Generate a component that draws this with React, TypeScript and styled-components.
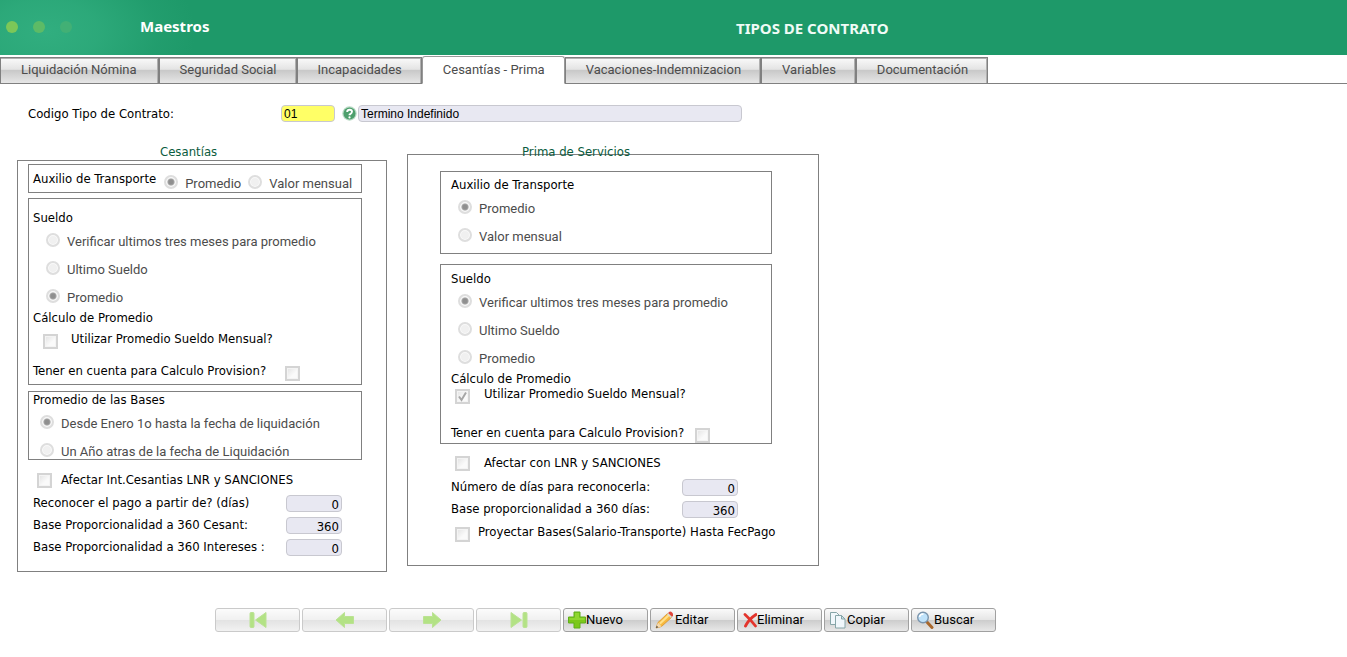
import React from 'react';
import styled, { createGlobalStyle, css } from 'styled-components';

const labelFont = '"DejaVu Sans Condensed", "DejaVu Sans", sans-serif';
const uiFont = 'Roboto, "Noto Sans", sans-serif';
const titleFont = '"Noto Sans", "Open Sans", sans-serif';
const line = '#808080';

const GlobalStyle = createGlobalStyle`
  *, *::before, *::after { box-sizing: border-box; }
  body {
    margin: 0;
    background: #fff;
    color: #000;
    font: 13px/16px ${labelFont};
  }
  input, button { font: inherit; margin: 0; }
`;

const Header = styled.header`
  display: flex;
  align-items: center;
  min-height: 55px;
  padding-bottom: 2px;
  background:
    radial-gradient(ellipse 150px 90px at 46px 32px, #31ae7f 0%, rgba(49, 174, 127, 0.75) 35%, rgba(49, 174, 127, 0.2) 75%, rgba(49, 174, 127, 0) 100%),
    #1e9969;
  color: #fff;
  font: bold 15px/20px ${titleFont};
`;

const Dots = styled.svg`
  width: 140px;
  height: 14px;
`;

const Brand = styled.span`
  width: 596px;
  padding-bottom: 2px;
`;

const PageTitle = styled.h1`
  margin: 0;
  padding-top: 2px;
  color: #f0fbf6;
  font: inherit;
`;

const TabBar = styled.nav`
  display: flex;
  align-items: flex-end;
  padding-top: 1px;

  &::after {
    content: '';
    flex: 1;
    border-bottom: 1px solid ${line};
  }
`;

const Tab = styled.button<{ $active?: boolean }>`
  height: 27px;
  padding: 0 19px 2px 20px;
  border: 1px solid ${line};
  box-shadow: inset 0 1px 0 #b0b0b0, inset -1px 0 0 #b0b0b0;
  background: linear-gradient(#fafafa 0%, #e4e4e4 45%, #c9c9c9 50%, #e6e6e6 100%);
  color: #4c4c4c;
  font: 13px/20px ${uiFont};
  white-space: nowrap;

  &:first-child { padding-right: 21px; }

  ${({ $active }) => $active && css`
    height: 28px;
    padding-bottom: 0;
    border-color: #999;
    border-bottom-color: #fff;
    border-radius: 3px 3px 0 0;
    box-shadow: none;
    background: #fff;
  `}
`;

const CodeRow = styled.div`
  display: flex;
  align-items: center;
  padding: 21px 0 0 28px;
`;

const CodeLabel = styled.label`
  width: 253px;
`;

const Field = styled.input<{ $w: number; $tone?: 'key' }>`
  width: ${({ $w }) => $w}px;
  height: 17px;
  padding: 0 2px;
  border: 1px solid #c8c8d0;
  border-radius: 4px;
  background: ${({ $tone }) => ($tone === 'key' ? '#ffff66' : '#e8e8f2')};
  color: #000;
  font: 12px/15px "Liberation Sans", Arial, sans-serif;
`;

const NumberField = styled(Field)`
  padding-top: 2px;
  font: 13px/13px ${labelFont};
  text-align: right;
`;

const HelpButton = styled.button`
  display: flex;
  padding: 0;
  margin: 0 1px 0 7px;
  border: 0;
  background: none;
`;

const Panels = styled.main`
  display: flex;
  align-items: flex-start;
  gap: 20px;
  padding: 22px 17px 0;
`;

const Section = styled.section<{ $w: number }>`
  width: ${({ $w }) => $w}px;
`;

const SectionTitle = styled.h2<{ $indent: number }>`
  margin: 0;
  padding-left: ${({ $indent }) => $indent}px;
  color: #0b5c40;
  font: inherit;
`;

const Panel = styled.div<{ $left: number; $top: number; $bottom: number; $raised?: boolean }>`
  margin-top: ${({ $raised }) => ($raised ? -6 : 0)}px;
  padding: ${({ $top }) => $top}px 24px ${({ $bottom }) => $bottom}px ${({ $left }) => $left}px;
  border: 1px solid ${line};
`;

const Box = styled.div<{ $pad: number; $top?: number; $bottom?: number; $after: number; $inset?: number }>`
  padding: ${({ $top = 0 }) => $top}px 0 ${({ $bottom = 0 }) => $bottom}px ${({ $pad }) => $pad}px;
  margin: 0 ${({ $inset = 0 }) => $inset}px ${({ $after }) => $after}px 0;
  border: 1px solid ${line};
`;

const InlineGroup = styled.div`
  display: flex;
  gap: 8px;
  height: 27px;
  padding-top: 6px;
  white-space: nowrap;
`;

const Heading = styled.div`
  height: 16px;
`;

const Choices = styled.div<{ $indent?: number; $inline?: boolean; $tight?: boolean }>`
  display: flex;
  flex-direction: ${({ $inline }) => ($inline ? 'row' : 'column')};
  gap: ${({ $inline }) => ($inline ? 7 : 0)}px;
  margin-top: ${({ $inline }) => ($inline ? -3 : 0)}px;
  margin-bottom: ${({ $tight }) => ($tight ? -5 : 0)}px;
  padding-left: ${({ $indent = 0 }) => $indent}px;
`;

const ChoiceLabel = styled.label`
  display: flex;
  align-items: center;
  gap: 7px;
  height: 28px;
  color: #4c4c4c;
  font: 13px/16px ${uiFont};

  span { padding-top: 3px; white-space: nowrap; }
`;

const Radio = styled.input.attrs({ type: 'radio' })`
  appearance: none;
  width: 14px;
  height: 14px;
  border: 2px solid #dedede;
  border-radius: 50%;
  background: #f0f0f0;
  box-shadow: inset 0 0 0 1px #fafafa;

  &:checked {
    background: radial-gradient(circle, #8f8f8f 0 2px, #a4a4a4 3px, #ececec 4px);
  }
`;

const CheckRow = styled.div<{ $h: number; $indent?: number; $gap: number; $above?: number }>`
  display: flex;
  align-items: center;
  gap: ${({ $gap }) => $gap}px;
  height: ${({ $h }) => $h}px;
  margin-top: ${({ $above = 0 }) => $above}px;
  padding-left: ${({ $indent = 0 }) => $indent}px;
  white-space: nowrap;
`;

const CheckSlot = styled.span<{ $low?: boolean }>`
  position: relative;
  display: flex;
  padding-top: ${({ $low }) => ($low ? 5 : 0)}px;

  svg {
    position: absolute;
    left: 0;
    bottom: 0;
    pointer-events: none;
  }
`;

const Checkbox = styled.input.attrs({ type: 'checkbox' })`
  appearance: none;
  width: 15px;
  height: 15px;
  border: 2px solid #d4d4d4;
  background: linear-gradient(135deg, #e2e2e2, #fafafa 60%);
  box-shadow: inset 0 0 0 1px #f4f4f4;
`;

const ValueRow = styled.div`
  display: flex;
  align-items: center;
  height: 22px;
`;

const ValueLabel = styled.label<{ $w: number }>`
  width: ${({ $w }) => $w}px;
  white-space: nowrap;
`;

const Indented = styled.div<{ $left: number }>`
  padding-left: ${({ $left }) => $left}px;
`;

const Toolbar = styled.footer`
  display: flex;
  gap: 2px;
  padding: 36px 0 25px 215px;
`;

const ToolButton = styled.button`
  display: flex;
  align-items: center;
  width: 85px;
  height: 24px;
  padding: 0 0 0 4px;
  border: 1px solid #a0a0a0;
  border-radius: 3px;
  background: linear-gradient(#fafafa 0%, #e6e6e6 48%, #cdcdcd 52%, #e8e8e8 100%);
  color: #000;
  font: 13px/20px ${uiFont};

  &:disabled {
    justify-content: center;
    padding: 0;
    opacity: 0.55;
  }
`;

type ChoiceProps = { name: string; options: string[]; selected: number; indent?: number; inline?: boolean; tight?: boolean };

function RadioGroup({ name, options, selected, indent, inline, tight }: ChoiceProps) {
  return (
    <Choices role="radiogroup" $indent={indent} $inline={inline} $tight={tight}>
      {options.map((text, i) => (
        <ChoiceLabel key={text}>
          <Radio name={name} defaultChecked={i === selected} disabled />
          <span>{text}</span>
        </ChoiceLabel>
      ))}
    </Choices>
  );
}

type CheckProps = { id: string; text: string; h: number; gap: number; indent?: number; above?: number; low?: boolean; checked?: boolean; after?: boolean };

function Check({ id, text, h, gap, indent, above, low, checked, after }: CheckProps) {
  const box = (
    <CheckSlot $low={low}>
      <Checkbox id={id} defaultChecked={checked} disabled />
      {checked && (
        <svg width="15" height="15" viewBox="0 0 15 15" fill="none" stroke="#a6a6a6" strokeWidth="2">
          <path d="M4 7.5 6.5 11 11 3.5" />
        </svg>
      )}
    </CheckSlot>
  );
  const label = <label htmlFor={id}>{text}</label>;
  return (
    <CheckRow $h={h} $gap={gap} $indent={indent} $above={above}>
      {after ? <>{label}{box}</> : <>{box}{label}</>}
    </CheckRow>
  );
}

function Value({ id, text, value, w }: { id: string; text: string; value: string; w: number }) {
  return (
    <ValueRow>
      <ValueLabel htmlFor={id} $w={w}>{text}</ValueLabel>
      <NumberField id={id} $w={56} defaultValue={value} readOnly />
    </ValueRow>
  );
}

const arrow = { fill: '#7cc81c', stroke: '#5fae1a', strokeWidth: 1, strokeLinejoin: 'round' as const };
const move = { fill: '#76cc22', stroke: '#84cc3c', strokeWidth: 1, strokeLinejoin: 'round' as const };

const FirstIcon = () => (
  <svg width="18" height="18" viewBox="0 0 18 18" {...move}>
    <rect x="1" y="1.5" width="4" height="15" rx="1" />
    <path d="M17 1.500v15L6.500 9z" />
  </svg>
);
const PrevIcon = () => (
  <svg width="20" height="18" viewBox="0 0 20 18" {...move}>
    <path d="M1 9 9.5 1.5V5.500H18.5v7H9.5v4z" />
  </svg>
);
const NextIcon = () => (
  <svg width="20" height="18" viewBox="0 0 20 18" {...move}>
    <path d="M19 9 10.5 1.5V5.500H1.5v7h9v4z" />
  </svg>
);
const LastIcon = () => (
  <svg width="18" height="18" viewBox="0 0 18 18" {...move}>
    <path d="M1 1.500v15L11.500 9z" />
    <rect x="13" y="1.5" width="4" height="15" rx="1" />
  </svg>
);
const AddIcon = () => (
  <svg width="18" height="18" viewBox="0 0 18 18" {...arrow}>
    <path d="M6 1h6v5h5.5v6H12v5H6v-5H.5V6H6z" />
    <path d="M7 2h4v5h5.5v2H1.5V7H7z" fill="#8fd62f" stroke="none" />
  </svg>
);
const EditIcon = () => (
  <svg width="20" height="18" viewBox="0 0 20 18">
    <path d="M1 17 3 11.5 13 2l4 4L6.5 15.5z" fill="#f7b93e" stroke="#d8922c" strokeWidth=".8" />
    <path d="M4 12 13.5 3l1.500 1.500L5.500 13.500z" fill="#ffe08a" />
    <path d="M13 2l1.500-1.200q1.200-.6 2.600.7t.9 2.900L17 6z" fill="#e0463c" />
    <path d="M12 3l1-1 4 4-1 1z" fill="#d5dbe0" />
    <path d="M1 17l2-5.500 3.500 4z" fill="#f3d9b0" />
    <path d="M1 17l.8-2.200L3.200 16.200z" fill="#333" />
  </svg>
);
const DeleteIcon = () => (
  <svg width="15" height="18" viewBox="0 0 15 18" fill="none" stroke="#e3342c" strokeWidth="2.8" strokeLinecap="round">
    <path d="M3 3.500Q8 8 13.500 15M14 3.500Q7 8 3.500 15" />
  </svg>
);
const CopyIcon = () => (
  <svg width="18" height="18" viewBox="0 0 18 18" fill="#f0f7fb" stroke="#86a5a8" strokeWidth="1">
    <path d="M1.500 1.500h6l3 3v9h-9z" />
    <path d="M6.500 4.500h6l3.500 3.500v9h-9.500z" />
    <path d="M12.500 4.500V8H16z" fill="#cfe3ea" />
  </svg>
);
const SearchIcon = () => (
  <svg width="18" height="18" viewBox="0 0 18 18">
    <path d="M10.500 10.500 16 16.500" stroke="#a8672c" strokeWidth="3" strokeLinecap="round" />
    <circle cx="7" cy="6.500" r="5.300" fill="#bfe2fa" stroke="#7a94ac" strokeWidth="1.400" />
    <path d="M3.500 6Q4 3 7.500 3" stroke="#fff" strokeWidth="1.500" fill="none" />
  </svg>
);
const HelpIcon = () => (
  <svg width="15" height="16" viewBox="0 0 15 16">
    <circle cx="7.500" cy="7.500" r="7.200" fill="#b9dac5" />
    <circle cx="7.500" cy="7.500" r="6" fill="#4d9f6c" />
    <path d="M5.200 6q0-2.300 2.400-2.300T10 5.700Q10 7 7.600 8.600v.7" fill="none" stroke="#fff" strokeWidth="1.900" />
    <circle cx="7.500" cy="11.400" r="1.100" fill="#fff" />
  </svg>
);

const tabs = ['Liquidación Nómina', 'Seguridad Social', 'Incapacidades', 'Cesantías - Prima', 'Vacaciones-Indemnizacion', 'Variables', 'Documentación'];
const sueldo = ['Verificar ultimos tres meses para promedio', 'Ultimo Sueldo', 'Promedio'];
const transporte = ['Promedio', 'Valor mensual'];
const moves = [
  { name: 'Primero', Icon: FirstIcon },
  { name: 'Anterior', Icon: PrevIcon },
  { name: 'Siguiente', Icon: NextIcon },
  { name: 'Último', Icon: LastIcon },
];
const actions = [
  { text: 'Nuevo', Icon: AddIcon },
  { text: 'Editar', Icon: EditIcon },
  { text: 'Eliminar', Icon: DeleteIcon },
  { text: 'Copiar', Icon: CopyIcon },
  { text: 'Buscar', Icon: SearchIcon },
];

function Cesantias() {
  return (
    <Section $w={370}>
      <SectionTitle $indent={143}>Cesantías</SectionTitle>
      <Panel $left={10} $top={3} $bottom={13}>
        <Box $pad={4} $after={5}>
          <InlineGroup>
            <Heading>Auxilio de Transporte</Heading>
            <RadioGroup name="ces-transporte" options={transporte} selected={0} inline />
          </InlineGroup>
        </Box>
        <Box $pad={4} $top={11} $after={6}>
          <Heading>Sueldo</Heading>
          <RadioGroup name="ces-sueldo" options={sueldo} selected={2} indent={13} />
          <Heading>Cálculo de Promedio</Heading>
          <Check id="ces-mensual" text="Utilizar Promedio Sueldo Mensual?" h={26} gap={13} indent={10} low />
          <Check id="ces-provision" text="Tener en cuenta para Calculo Provision?" h={26} gap={19} above={6} low after />
        </Box>
        <Box $pad={4} $after={8}>
          <Heading>Promedio de las Bases</Heading>
          <RadioGroup name="ces-bases" options={['Desde Enero 1o hasta la fecha de liquidación', 'Un Año atras de la fecha de Liquidación']} selected={0} indent={7} tight />
        </Box>
        <Indented $left={5}>
          <Check id="ces-lnr" text="Afectar Int.Cesantias LNR y SANCIONES" h={24} gap={9} indent={4} />
          <Value id="ces-dias" text="Reconocer el pago a partir de? (días)" value="0" w={253} />
          <Value id="ces-base" text="Base Proporcionalidad a 360 Cesant:" value="360" w={253} />
          <Value id="ces-intereses" text="Base Proporcionalidad a 360 Intereses :" value="0" w={253} />
        </Indented>
      </Panel>
    </Section>
  );
}

function Prima() {
  return (
    <Section $w={412}>
      <SectionTitle $indent={115}>Prima de Servicios</SectionTitle>
      <Panel $left={32} $top={16} $bottom={21} $raised>
        <Box $pad={10} $top={5} $bottom={4} $after={10} $inset={22}>
          <Heading>Auxilio de Transporte</Heading>
          <RadioGroup name="pri-transporte" options={transporte} selected={0} indent={7} />
        </Box>
        <Box $pad={10} $top={6} $after={6} $inset={22}>
          <Heading>Sueldo</Heading>
          <RadioGroup name="pri-sueldo" options={sueldo} selected={0} indent={7} />
          <Heading>Cálculo de Promedio</Heading>
          <Check id="pri-mensual" text="Utilizar Promedio Sueldo Mensual?" h={14} gap={14} indent={4} low checked />
          <Check id="pri-provision" text="Tener en cuenta para Calculo Provision?" h={20} gap={11} above={22} low after />
        </Box>
        <Indented $left={11}>
          <Check id="pri-lnr" text="Afectar con LNR y SANCIONES" h={26} gap={14} indent={4} />
          <Value id="pri-dias" text="Número de días para reconocerla:" value="0" w={231} />
          <Value id="pri-base" text="Base proporcionalidad a 360 días:" value="360" w={231} />
          <Check id="pri-proyectar" text="Proyectar Bases(Salario-Transporte) Hasta FecPago" h={24} gap={8} indent={4} low />
        </Indented>
      </Panel>
    </Section>
  );
}

export default function App() {
  return (
    <>
      <GlobalStyle />
      <Header>
        <Dots viewBox="0 0 140 14">
          <circle cx="12" cy="7" r="6" fill="#7cc758" />
          <circle cx="39" cy="7" r="6" fill="#5dbb66" />
          <circle cx="66" cy="7" r="6" fill="#42b075" />
        </Dots>
        <Brand>Maestros</Brand>
        <PageTitle>TIPOS DE CONTRATO</PageTitle>
      </Header>
      <TabBar>
        {tabs.map((t) => (
          <Tab key={t} type="button" $active={t === 'Cesantías - Prima'}>{t}</Tab>
        ))}
      </TabBar>
      <CodeRow>
        <CodeLabel htmlFor="codigo">Codigo Tipo de Contrato:</CodeLabel>
        <Field id="codigo" $w={54} $tone="key" defaultValue="01" />
        <HelpButton type="button" title="Ayuda"><HelpIcon /></HelpButton>
        <Field $w={384} defaultValue="Termino Indefinido" aria-label="Descripción" readOnly />
      </CodeRow>
      <Panels>
        <Cesantias />
        <Prima />
      </Panels>
      <Toolbar>
        {moves.map(({ name, Icon }) => (
          <ToolButton key={name} type="button" title={name} disabled><Icon /></ToolButton>
        ))}
        {actions.map(({ text, Icon }) => (
          <ToolButton key={text} type="button"><Icon />{text}</ToolButton>
        ))}
      </Toolbar>
    </>
  );
}
